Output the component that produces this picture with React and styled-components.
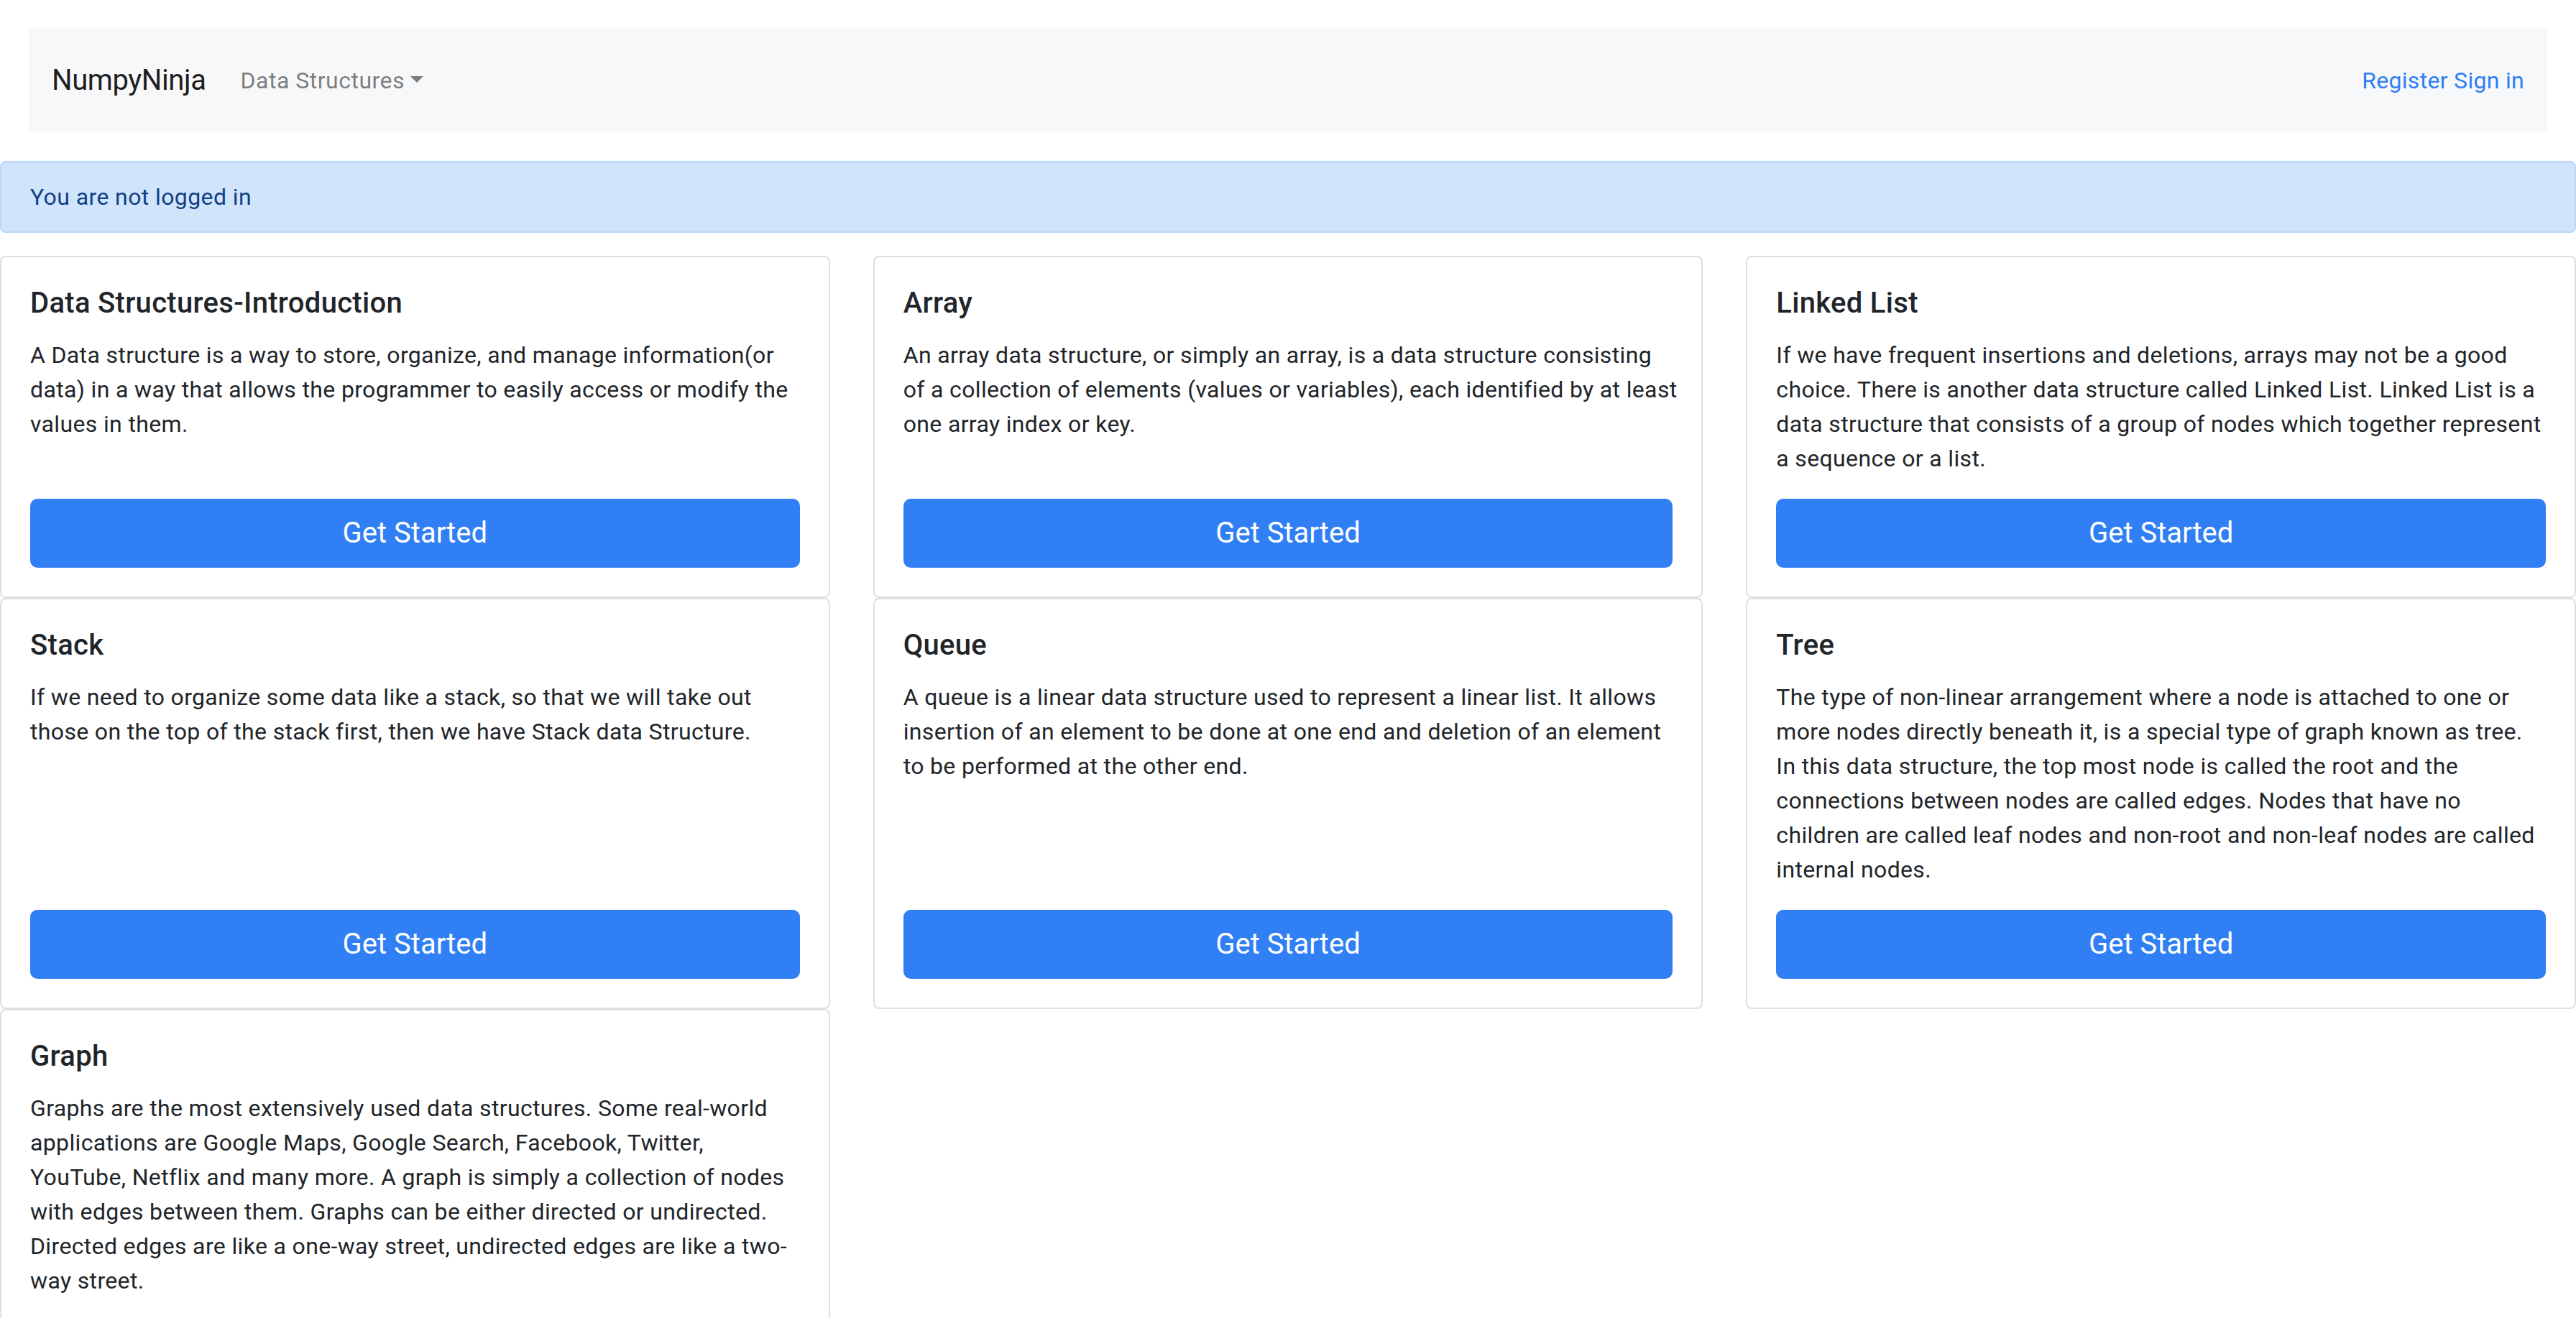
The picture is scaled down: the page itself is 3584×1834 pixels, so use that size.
import React from 'react';
import styled, { createGlobalStyle } from 'styled-components';

const GlobalStyle = createGlobalStyle`
  *, *::before, *::after { box-sizing: border-box; }
  html, body { margin: 0; padding: 0; background: #ffffff; }
  body {
    font-family: Roboto, "Liberation Sans", Arial, sans-serif;
    font-size: 32px;
    line-height: 1.5;
    color: #212529;
    letter-spacing: 0.4px;
  }
`;

const Page = styled.div`
  width: 100%;
`;

const Navbar = styled.nav`
  margin: 40px 40px 0;
  padding: 32px;
  background: #f7f8fa;
  display: flex;
  align-items: center;
`;

const Brand = styled.a`
  font-size: 40px;
  line-height: 1.5;
  padding: 10px 0;
  margin-right: 32px;
  color: rgba(0, 0, 0, 0.9);
  text-decoration: none;
  white-space: nowrap;
  letter-spacing: -0.4px;
`;

const DropdownToggle = styled.a`
  display: inline-block;
  padding: 16px;
  color: rgba(0, 0, 0, 0.5);
  text-decoration: none;
  white-space: nowrap;
  letter-spacing: 0.5px;

  &::after {
    content: '';
    display: inline-block;
    margin-left: 0.255em;
    vertical-align: 0.255em;
    border-top: 0.3em solid;
    border-right: 0.3em solid transparent;
    border-bottom: 0;
    border-left: 0.3em solid transparent;
  }
`;

const AuthLinks = styled.div`
  margin-left: auto;
  white-space: nowrap;
  letter-spacing: 0.3px;
`;

const NavLink = styled.a`
  color: #2f7ef5;
  text-decoration: none;
`;

const Alert = styled.div`
  margin: 40px 0 32px;
  padding: 24px 40px;
  border: 2px solid #b9d6fb;
  border-radius: 8px;
  background: #d0e4fb;
  color: #123f86;
`;

const CardGrid = styled.div`
  display: grid;
  grid-template-columns: repeat(3, 1fr);
  column-gap: 60px;
  row-gap: 0;
  align-items: stretch;
`;

const Card = styled.div`
  display: flex;
  flex-direction: column;
  min-width: 0;
  background: #ffffff;
  border: 2px solid #dfdfdf;
  border-radius: 8px;
`;

const CardBody = styled.div`
  flex: 1 1 auto;
  display: flex;
  flex-direction: column;
  padding: 40px;
`;

const CardTitle = styled.h5`
  margin: 0 0 24px;
  font-size: 40px;
  font-weight: 500;
  line-height: 1.2;
  letter-spacing: 0.3px;
  color: #212529;
`;

const CardText = styled.p`
  margin: 0 0 32px;
  letter-spacing: 0.35px;
`;

const TextLine = styled.span`
  display: block;
  white-space: nowrap;
`;

const GetStarted = styled.a`
  display: block;
  width: 100%;
  margin-top: auto;
  padding: 16px 32px;
  font-size: 40px;
  line-height: 1.5;
  letter-spacing: 0;
  text-align: center;
  color: #ffffff;
  background: #317ff4;
  border: 2px solid #317ff4;
  border-radius: 10px;
  text-decoration: none;
`;

const topics = [
  {
    title: 'Data Structures-Introduction',
    lines: [
      'A Data structure is a way to store, organize, and manage information(or',
      'data) in a way that allows the programmer to easily access or modify the',
      'values in them.',
    ],
  },
  {
    title: 'Array',
    lines: [
      'An array data structure, or simply an array, is a data structure consisting',
      'of a collection of elements (values or variables), each identified by at least',
      'one array index or key.',
    ],
  },
  {
    title: 'Linked List',
    lines: [
      'If we have frequent insertions and deletions, arrays may not be a good',
      'choice. There is another data structure called Linked List. Linked List is a',
      'data structure that consists of a group of nodes which together represent',
      'a sequence or a list.',
    ],
  },
  {
    title: 'Stack',
    lines: [
      'If we need to organize some data like a stack, so that we will take out',
      'those on the top of the stack first, then we have Stack data Structure.',
    ],
  },
  {
    title: 'Queue',
    lines: [
      'A queue is a linear data structure used to represent a linear list. It allows',
      'insertion of an element to be done at one end and deletion of an element',
      'to be performed at the other end.',
    ],
  },
  {
    title: 'Tree',
    lines: [
      'The type of non-linear arrangement where a node is attached to one or',
      'more nodes directly beneath it, is a special type of graph known as tree.',
      'In this data structure, the top most node is called the root and the',
      'connections between nodes are called edges. Nodes that have no',
      'children are called leaf nodes and non-root and non-leaf nodes are called',
      'internal nodes.',
    ],
  },
  {
    title: 'Graph',
    lines: [
      'Graphs are the most extensively used data structures. Some real-world',
      'applications are Google Maps, Google Search, Facebook, Twitter,',
      'YouTube, Netflix and many more. A graph is simply a collection of nodes',
      'with edges between them. Graphs can be either directed or undirected.',
      'Directed edges are like a one-way street, undirected edges are like a two-',
      'way street.',
    ],
  },
];

export default function App() {
  return (
    <Page>
      <GlobalStyle />
      <Navbar>
        <Brand href="#">NumpyNinja</Brand>
        <DropdownToggle href="#">Data Structures</DropdownToggle>
        <AuthLinks>
          <NavLink href="#">Register</NavLink> <NavLink href="#">Sign in</NavLink>
        </AuthLinks>
      </Navbar>
      <Alert role="alert">You are not logged in</Alert>
      <CardGrid>
        {topics.map((t) => (
          <Card key={t.title}>
            <CardBody>
              <CardTitle>{t.title}</CardTitle>
              <CardText>
                {t.lines.map((line, i) => (
                  <TextLine key={i}>{line}</TextLine>
                ))}
              </CardText>
              <GetStarted href="#">Get Started</GetStarted>
            </CardBody>
          </Card>
        ))}
      </CardGrid>
    </Page>
  );
}
